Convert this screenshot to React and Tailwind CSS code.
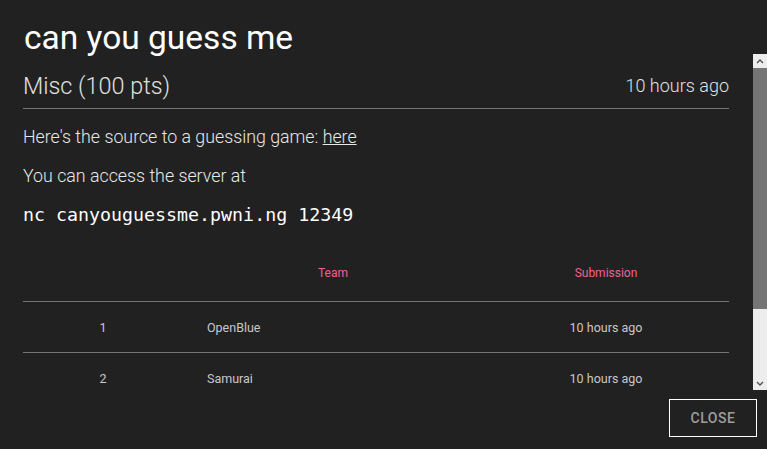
const rows = [
  { rank: 1, team: 'OpenBlue', time: '10 hours ago' },
  { rank: 2, team: 'Samurai', time: '10 hours ago' },
];

function FakeScrollbar() {
  return (
    <div className="w-[14px] flex flex-col bg-[#ededed]">
      <div className="h-[14px] flex items-center justify-center">
        <svg width="8" height="5" viewBox="0 0 8 5" fill="none">
          <path d="M1 4L4 1L7 4" stroke="#505050" strokeWidth="1.4" />
        </svg>
      </div>
      <div className="h-[241px] bg-[#757575]" />
      <div className="flex-1" />
      <div className="h-[14px] flex items-center justify-center">
        <svg width="8" height="5" viewBox="0 0 8 5" fill="none">
          <path d="M1 1L4 4L7 1" stroke="#505050" strokeWidth="1.4" />
        </svg>
      </div>
    </div>
  );
}

export default function App() {
  return (
    <div className="w-[767px] h-[449px] bg-[#212121] flex flex-col overflow-hidden font-['Roboto',sans-serif]">
      <div className="h-[54px] shrink-0 px-6 pt-[18px]">
        <h1 className="text-[33.5px] leading-[40px] text-white">can you guess me</h1>
      </div>

      <div className="h-[336px] shrink-0 flex">
        <div className="flex-1 overflow-hidden pl-[23px] pr-[24px]">
          <div className="flex items-end justify-between pt-[16px] pb-[6px] border-b border-[#757575]">
            <span className="text-[23.4px] leading-[32px] font-light text-[#e0e0e0]">Misc (100 pts)</span>
            <span className="text-[18px] leading-[32px] font-light text-[#e0e0e0]">10 hours ago</span>
          </div>

          <p className="mt-[16px] text-[17.8px] leading-[24px] font-light text-[#e8e8e8]">
            Here's the source to a guessing game: <a className="underline">here</a>
          </p>
          <p className="mt-[15px] text-[17.8px] leading-[24px] font-light text-[#e8e8e8]">You can access the server at</p>
          <p className="mt-[15px] font-['DejaVu_Sans_Mono',monospace] text-[18.3px] leading-[24px] text-white">
            nc canyouguessme.pwni.ng 12349
          </p>

          <table className="mt-[16px] w-full border-collapse text-[12.5px]">
            <thead>
              <tr className="h-[58px] border-b border-[#757575]">
                <th className="w-[160px]" />
                <th className="w-[300px] font-normal text-[12px] text-[#f06292] pt-[2px]">Team</th>
                <th className="font-normal text-[12px] text-[#f06292] pt-[2px]">Submission</th>
              </tr>
            </thead>
            <tbody>
              {rows.map((r) => (
                <tr key={r.rank} className="h-[51px] border-b border-[#757575] text-[#c8c8c8]">
                  <td className="text-center pt-[4px]">{r.rank}</td>
                  <td className="pl-[24px] pt-[4px]">{r.team}</td>
                  <td className="text-center pt-[4px]">{r.time}</td>
                </tr>
              ))}
            </tbody>
          </table>
        </div>
        <FakeScrollbar />
      </div>

      <div className="flex-1 flex justify-end items-start pt-[9px] pr-[10px]">
        <button className="w-[88px] h-[38px] border border-white text-[14px] font-medium uppercase tracking-[0.5px] text-[#9e9e9e]">
          Close
        </button>
      </div>
    </div>
  );
}
